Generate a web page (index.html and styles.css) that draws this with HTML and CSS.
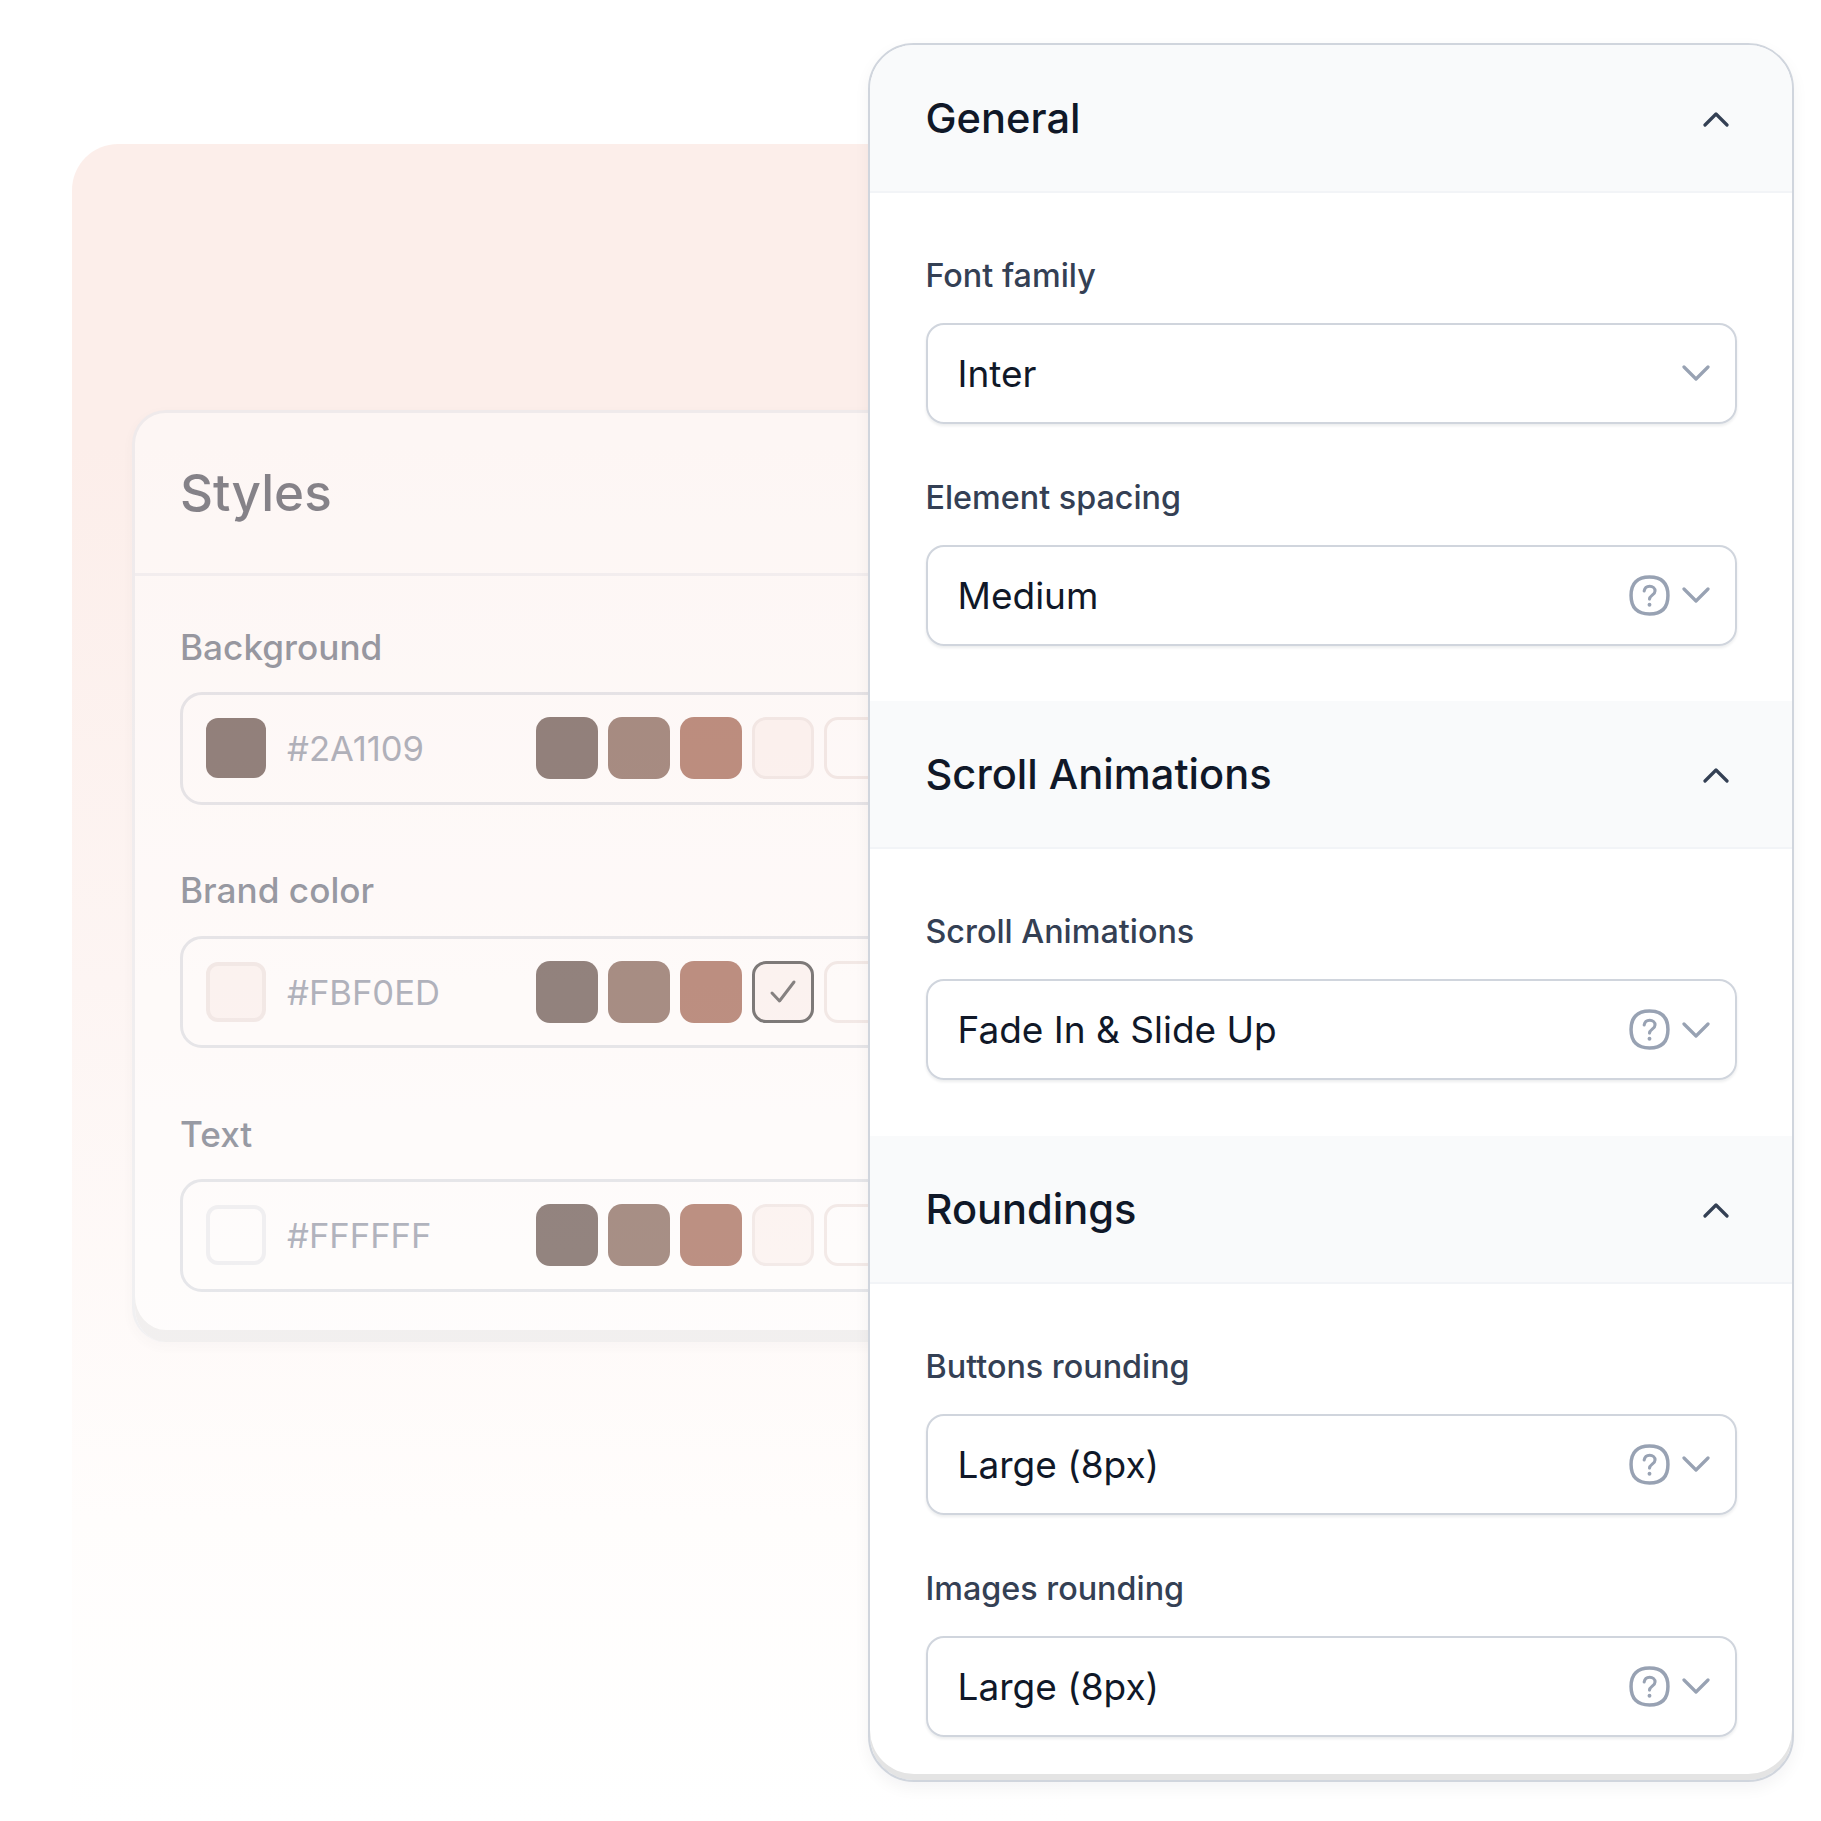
FILE: index.html
```html
<!DOCTYPE html>
<html lang="en">
<head>
<meta charset="utf-8">
<title>Styles settings</title>
<link rel="stylesheet" href="styles.css">
</head>
<body>
<svg class="sprites" width="0" height="0" aria-hidden="true">
  <symbol id="help" viewBox="0 0 40 40"><path d="M20 2C32 2 38 8 38 20S32 38 20 38 2 32 2 20 8 2 20 2Z" fill="none" stroke="currentColor" stroke-width="3.400"/><path d="M14.800 15.600c.5-3 2.700-4.600 5.400-4.600 3 0 5.200 1.900 5.200 4.500 0 4-5.200 4.200-5.400 8" fill="none" stroke="currentColor" stroke-width="3" stroke-linecap="round"/><circle cx="20" cy="29" r="1.900" fill="currentColor"/></symbol>
  <symbol id="down" viewBox="0 0 28 16"><path d="M2 2l12 12L26 2" fill="none" stroke="currentColor" stroke-width="3.200" stroke-linecap="round" stroke-linejoin="round"/></symbol>
  <symbol id="up" viewBox="0 0 26 16"><path d="M2 14L13 3l11 11" fill="none" stroke="currentColor" stroke-width="3.200" stroke-linecap="round" stroke-linejoin="round"/></symbol>
</svg>

<main class="canvas">
  <section class="backdrop">
    <div class="styles-card">
      <h2 class="styles-title">Styles</h2>
      <div class="styles-body">
        <div class="color-field">
          <div class="color-label">Background</div>
          <div class="color-row">
            <span class="preview preview-dark"></span>
            <span class="hex">#2A1109</span>
            <div class="swatches">
              <span class="swatch s1"></span><span class="swatch s2"></span><span class="swatch s3"></span><span class="swatch s4"></span><span class="swatch s5"></span>
            </div>
          </div>
        </div>
        <div class="color-field">
          <div class="color-label">Brand color</div>
          <div class="color-row">
            <span class="preview preview-tint"></span>
            <span class="hex">#FBF0ED</span>
            <div class="swatches">
              <span class="swatch s1"></span><span class="swatch s2"></span><span class="swatch s3"></span>
              <span class="swatch s4 selected"><svg class="check" viewBox="0 0 28 28"><path d="M3 15l7.500 8L25 4" fill="none" stroke="currentColor" stroke-width="3" stroke-linecap="round" stroke-linejoin="round"/></svg></span>
              <span class="swatch s5"></span>
            </div>
          </div>
        </div>
        <div class="color-field">
          <div class="color-label">Text</div>
          <div class="color-row">
            <span class="preview preview-white"></span>
            <span class="hex">#FFFFFF</span>
            <div class="swatches">
              <span class="swatch s1"></span><span class="swatch s2"></span><span class="swatch s3"></span><span class="swatch s4"></span><span class="swatch s5"></span>
            </div>
          </div>
        </div>
      </div>
    </div>
  </section>

  <aside class="panel">
    <header class="sec-head sec-first"><h3>General</h3><svg class="chev-up"><use href="#up"/></svg></header>
    <div class="sec-body">
      <div class="field">
        <label class="field-label">Font family</label>
        <div class="select"><span class="value">Inter</span><svg class="chev-down"><use href="#down"/></svg></div>
      </div>
      <div class="field">
        <label class="field-label">Element spacing</label>
        <div class="select"><span class="value">Medium</span><svg class="help"><use href="#help"/></svg><svg class="chev-down"><use href="#down"/></svg></div>
      </div>
    </div>
    <header class="sec-head"><h3>Scroll Animations</h3><svg class="chev-up"><use href="#up"/></svg></header>
    <div class="sec-body">
      <div class="field">
        <label class="field-label">Scroll Animations</label>
        <div class="select"><span class="value">Fade In &amp; Slide Up</span><svg class="help"><use href="#help"/></svg><svg class="chev-down"><use href="#down"/></svg></div>
      </div>
    </div>
    <header class="sec-head"><h3>Roundings</h3><svg class="chev-up"><use href="#up"/></svg></header>
    <div class="sec-body">
      <div class="field">
        <label class="field-label">Buttons rounding</label>
        <div class="select"><span class="value">Large (8px)</span><svg class="help"><use href="#help"/></svg><svg class="chev-down"><use href="#down"/></svg></div>
      </div>
      <div class="field">
        <label class="field-label">Images rounding</label>
        <div class="select"><span class="value">Large (8px)</span><svg class="help"><use href="#help"/></svg><svg class="chev-down"><use href="#down"/></svg></div>
      </div>
    </div>
  </aside>
</main>
</body>
</html>
```
FILE: styles.css
```css
* { box-sizing: border-box; }
html, body { margin: 0; padding: 0; background: #fff; }
body { font-family: "Inter", "Liberation Sans", sans-serif; }
.sprites { position: absolute; }

.canvas { position: relative; width: 1821px; height: 1821px; overflow: hidden; padding: 144px 0 0 72px; }

.backdrop {
  width: 1000px;
  height: 1677px;
  padding-top: 266px;
  padding-left: 60px;
  border-radius: 46px 46px 0 0;
  background: linear-gradient(180deg, #fceeea 0%, #fceeea 18%, #fdf5f3 50%, #fffdfc 82%, #ffffff 100%);
}

.styles-card {
  width: 1000px;
  height: 932px;
  border-radius: 34px;
  background: #fff;
  opacity: .5;
  border: 3px solid #e4e7ec;
  border-bottom: 0;
  box-shadow: inset 0 -12px 0 #e6e6e6, 0 4px 12px rgba(16,24,40,.04);
  padding-bottom: 12px;
}
.styles-title {
  margin: 0;
  height: 163px;
  padding: 0 0 2px 45px;
  display: flex;
  align-items: center;
  font-size: 51.200px;
  font-weight: 500;
  color: #101828;
  border-bottom: 3px solid #eaecf0;
}
.styles-body { padding: 48.500px 0 0 45px; display: flex; flex-direction: column; gap: 63.500px; }
.color-field { display: flex; flex-direction: column; gap: 23.500px; }
.color-label { font-size: 35.200px; line-height: 44px; font-weight: 500; color: #344054; }
.color-row {
  height: 112.500px;
  width: 900px;
  border: 3px solid #d0d5dd;
  border-radius: 22px;
  padding: 0 0 0 23px;
  display: flex;
  align-items: center;
}
.preview { width: 60px; height: 60px; border-radius: 12px; flex: none; }
.preview-dark { background: #2a1109; }
.preview-tint { background: #fbf0ed; border: 4px solid #e9dcd9; }
.preview-white { background: #fff; border: 4px solid #e4e7ec; }
.hex { width: 270px; padding-left: 21px; font-size: 34.600px; color: #667085; flex: none; }
.swatches { display: flex; gap: 10.500px; }
.swatch { width: 61.500px; height: 62px; border-radius: 14px; display: flex; align-items: center; justify-content: center; flex: none; }
.s1 { background: #2a1109; }
.s2 { background: #532716; }
.s3 { background: #7d2a10; }
.s4 { background: #fbf0ed; border: 3px solid #e9dcd9; }
.s5 { background: #fff; border: 3px solid #e9dcd9; }
.selected { border-color: #000; background: #fbf0ed; }
.check { width: 28px; height: 28px; color: #101010; }

.panel {
  position: absolute;
  left: 868px;
  top: 43px;
  width: 926px;
  height: 1738.500px;
  border: 2.500px solid #d0d5dd;
  border-radius: 46px;
  background: #fff;
  box-shadow: inset 0 -6px 0 #e4e4e4, 0 6px 16px rgba(16,24,40,.05);
  overflow: hidden;
}
.sec-head {
  height: 148px;
  padding: 0 63px 0 55.500px;
  display: flex;
  align-items: center;
  justify-content: space-between;
  background: #f9fafb;
  border-bottom: 2px solid #f2f4f7;
}
.sec-first { height: 147.500px; }
.sec-head h3 { margin: 0; font-size: 41.600px; font-weight: 500; color: #101828; }
.chev-up { width: 26px; height: 16px; margin-top: 2px; color: #344054; }
.sec-body { padding: 61px 55.500px 55.500px; display: flex; flex-direction: column; gap: 52px; }
.field { display: flex; flex-direction: column; gap: 25px; }
.field-label { font-size: 32.300px; line-height: 44px; font-weight: 500; color: #344054; }
.select {
  height: 101px;
  border: 2.500px solid #d0d5dd;
  border-radius: 18px;
  padding: 0 25px 0 30px;
  display: flex;
  align-items: center;
  gap: 12px;
  box-shadow: 0 2px 3px rgba(16,24,40,.08);
}
.value { flex: 1; font-size: 37px; color: #101828; }
.help { width: 41px; height: 41px; color: #98a2b3; }
.chev-down { width: 28px; height: 16px; color: #98a2b3; }
```
